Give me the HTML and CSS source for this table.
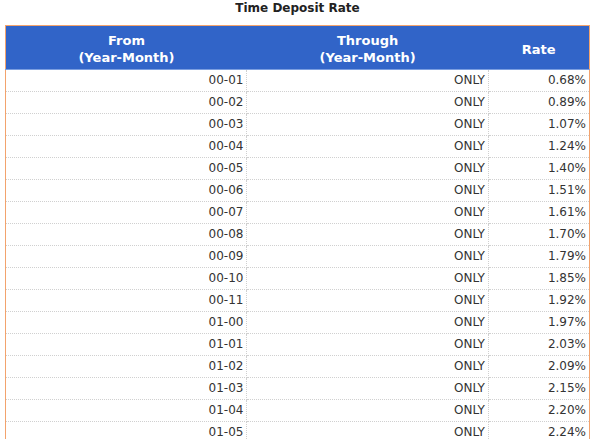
FILE: index.html
```html
<!DOCTYPE html>
<html>
<head>
<meta charset="utf-8">
<link rel="stylesheet" href="styles.css">
</head>
<body>
<div class="title">Time Deposit Rate</div>
<table class="rates">
<thead>
<tr><th class="c1">From<br>(Year-Month)</th><th class="c2">Through<br>(Year-Month)</th><th class="c3">Rate</th></tr>
</thead>
<tbody>
<tr><td>00-01</td><td>ONLY</td><td>0.68%</td></tr>
<tr><td>00-02</td><td>ONLY</td><td>0.89%</td></tr>
<tr><td>00-03</td><td>ONLY</td><td>1.07%</td></tr>
<tr><td>00-04</td><td>ONLY</td><td>1.24%</td></tr>
<tr><td>00-05</td><td>ONLY</td><td>1.40%</td></tr>
<tr><td>00-06</td><td>ONLY</td><td>1.51%</td></tr>
<tr><td>00-07</td><td>ONLY</td><td>1.61%</td></tr>
<tr><td>00-08</td><td>ONLY</td><td>1.70%</td></tr>
<tr><td>00-09</td><td>ONLY</td><td>1.79%</td></tr>
<tr><td>00-10</td><td>ONLY</td><td>1.85%</td></tr>
<tr><td>00-11</td><td>ONLY</td><td>1.92%</td></tr>
<tr><td>01-00</td><td>ONLY</td><td>1.97%</td></tr>
<tr><td>01-01</td><td>ONLY</td><td>2.03%</td></tr>
<tr><td>01-02</td><td>ONLY</td><td>2.09%</td></tr>
<tr><td>01-03</td><td>ONLY</td><td>2.15%</td></tr>
<tr><td>01-04</td><td>ONLY</td><td>2.20%</td></tr>
<tr><td>01-05</td><td>ONLY</td><td>2.24%</td></tr>
</tbody>
</table>
</body>
</html>
```
FILE: styles.css
```css
html, body {
  margin: 0;
  padding: 0;
  background: #ffffff;
}
body {
  font-family: "DejaVu Sans", Verdana, sans-serif;
  color: #333333;
  padding: 0 6px 0 5px;
}
.title {
  text-align: center;
  font-weight: bold;
  font-size: 12px;
  color: #222222;
  height: 25px;
  line-height: 17px;
}
.rates {
  width: 585px;
  border-collapse: collapse;
  border: 1px solid #f3a36d;
  table-layout: fixed;
}
.rates th {
  background: #3164c8;
  color: #ffffff;
  font-size: 13px;
  font-weight: bold;
  line-height: 17px;
  height: 44px;
  padding: 3px 0 0 0;
  text-align: center;
  vertical-align: middle;
  border-bottom: 1px solid #7b9ee0;
  box-sizing: border-box;
}
.rates .c1 { width: 241px; }
.rates .c2 { width: 241px; }
.rates .c3 { width: 101px; }
.rates td {
  font-size: 12px;
  text-align: right;
  height: 21px;
  padding: 0 3px 0 0;
  line-height: 21px;
  border-bottom: 1px dotted #d0d0d0;
  border-right: 1px dotted #d0d0d0;
}
.rates td:last-child {
  border-right: none;
}
```
